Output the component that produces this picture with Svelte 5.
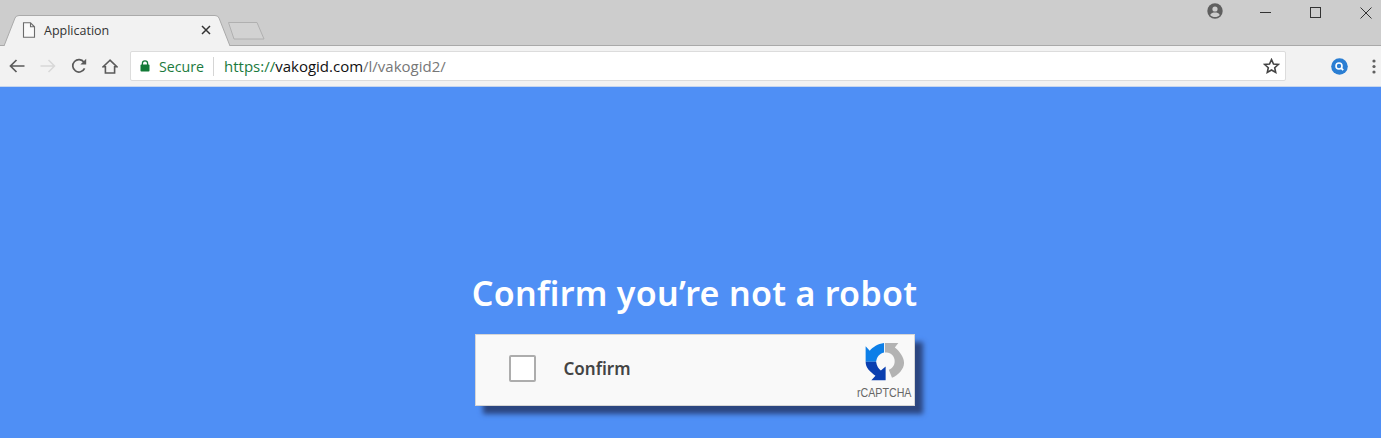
<script>
  const title = "Confirm you’re not a robot";
</script>

<div class="window">
  <header class="tabstrip">
    <div class="tab">
      <svg class="tabshape" width="227" height="32" viewBox="0 0 227 32">
        <path d="M0 31 L11 3 Q12 .5 15 .5 H211 Q214 .5 215 3 L226 31" fill="#f2f2f2" stroke="#aaaaaa" stroke-width="1"/>
      </svg>
      <svg class="doc" width="14" height="16" viewBox="0 0 14 16">
        <path d="M1.5 .8 H8.5 L12.5 4.8 V15.2 H1.5 Z M8.5 .8 V4.8 H12.5" fill="#fafafa" stroke="#6b6b6b" stroke-width="1.1"/>
      </svg>
      <span class="tabtitle">Application</span>
      <svg class="tabclose" width="10" height="10" viewBox="0 0 10 10">
        <path d="M1 1 L9 9 M9 1 L1 9" stroke="#333" stroke-width="1.5"/>
      </svg>
    </div>
    <svg class="newtab" width="37" height="18" viewBox="0 0 37 18">
      <path d="M.5 .5 H29 L36 17 H6 Z" fill="#d2d2d2" stroke="#b0b0b0" stroke-linejoin="round"/>
    </svg>
    <div class="spacer"></div>
    <svg class="profile" width="16" height="16" viewBox="0 0 16 16">
      <circle cx="8" cy="8" r="7.7" fill="#5f5f5f"/>
      <circle cx="8" cy="6" r="2.6" fill="#cdcdcd"/>
      <path d="M3.2 12 C4 9.9 6 9.5 8 9.5 C10 9.5 12 9.9 12.8 12 C11.6 13.4 10 14.1 8 14.1 C6 14.1 4.4 13.4 3.2 12Z" fill="#cdcdcd"/>
    </svg>
    <div class="winbtns">
      <svg width="12" height="12" viewBox="0 0 12 12"><path d="M0 5.5 H11" stroke="#333" stroke-width="1"/></svg>
      <svg width="12" height="12" viewBox="0 0 12 12"><rect x=".5" y=".5" width="10" height="10" fill="none" stroke="#333" stroke-width="1"/></svg>
      <svg width="12" height="12" viewBox="0 0 12 12"><path d="M.5 .5 L11.5 11.5 M11.5 .5 L.5 11.5" stroke="#333" stroke-width="1"/></svg>
    </div>
  </header>

  <nav class="toolbar">
    <div class="navbtns">
      <svg width="16" height="14" viewBox="0 0 16 14"><path d="M15.5 7 H2 M7.5 1 L1.5 7 L7.5 13" fill="none" stroke="#5a5a5a" stroke-width="1.7"/></svg>
      <svg width="16" height="14" viewBox="0 0 16 14"><path d="M.5 7 H14 M8.5 1 L14.5 7 L8.5 13" fill="none" stroke="#d8d8d8" stroke-width="1.5"/></svg>
      <svg width="16" height="16" viewBox="0 0 16 16"><path d="M13.6 10.4 A6.2 6.2 0 1 1 13 4.2" fill="none" stroke="#5a5a5a" stroke-width="1.7"/><path d="M15.2 .8 V6.6 H9.4 Z" fill="#5a5a5a"/></svg>
      <svg width="16" height="15" viewBox="0 0 16 15"><path d="M8 1.2 L1.2 7.8 H3.4 V14 H12.6 V7.8 H14.8 Z" fill="none" stroke="#5a5a5a" stroke-width="1.6"/></svg>
    </div>
    <div class="omnibox">
      <svg class="lock" width="10" height="12" viewBox="0 0 10 12"><path d="M2.4 5 V3.4 A2.6 2.6 0 0 1 7.6 3.4 V5" fill="none" stroke="#137a37" stroke-width="1.3"/><rect x=".5" y="4.6" width="9" height="7" rx=".8" fill="#137a37"/></svg>
      <span class="secure">Secure</span>
      <span class="divider"></span>
      <span class="url"><span class="scheme">https://</span><span class="host">vakogid.com</span><span class="path">/l/vakogid2/</span></span>
      <svg class="star" width="17" height="16" viewBox="0 0 17 16"><path d="M8.5 1.6 L10.5 6 L15.3 6.5 L11.7 9.7 L12.7 14.4 L8.5 12 L4.3 14.4 L5.3 9.7 L1.7 6.5 L6.5 6 Z" fill="none" stroke="#444" stroke-width="1.6" stroke-linejoin="miter"/></svg>
    </div>
    <svg class="ext" width="17" height="17" viewBox="0 0 17 17">
      <circle cx="8.5" cy="8.5" r="8.3" fill="#2a7ed3"/>
      <circle cx="8" cy="8" r="3" fill="none" stroke="#fff" stroke-width="1.6"/>
      <path d="M10.2 10.2 L12.2 12.2" stroke="#fff" stroke-width="1.8"/>
    </svg>
    <svg class="menu" width="4" height="15" viewBox="0 0 4 15">
      <circle cx="2" cy="2" r="1.6" fill="#5f5f5f"/><circle cx="2" cy="7.5" r="1.6" fill="#5f5f5f"/><circle cx="2" cy="13" r="1.6" fill="#5f5f5f"/>
    </svg>
  </nav>

  <main class="page">
    <h1>{title}</h1>
    <div class="card">
      <span class="checkbox"></span>
      <span class="label">Confirm</span>
      <div class="badge">
        <svg width="40" height="39" viewBox="25 15 126 112" preserveAspectRatio="none">
          <path d="M27 27 L40 40 C50 30 65 20 85 18 V45 C70 48 62 58 60 72 H27 Z" fill="#0d7fe8"/>
          <path d="M27 72 H60 C62 85 68 92 75 97 L90 85 V125 H45 L58 112 C40 100 27 90 27 72 Z" fill="#0a3fb0"/>
          <path d="M88 18 H130 L119 31 C135 42 148 60 148 75 C148 92 130 110 110 118 L100 95 C115 88 120 78 118 65 C115 50 102 45 88 45 Z" fill="#b3b3b3"/>
        </svg>
        <span class="brand">rCAPTCHA</span>
      </div>
    </div>
  </main>
</div>

<style>
  :global(body) { margin: 0; }
  .window {
    width: 1381px;
    height: 438px;
    display: flex;
    flex-direction: column;
    overflow: hidden;
    font-family: "Noto Sans", sans-serif;
  }
  .tabstrip {
    height: 46px;
    flex: none;
    box-sizing: border-box;
    background: #cdcdcd;
    border-bottom: 1px solid #a9a9a9;
    display: flex;
    align-items: flex-start;
    padding-left: 4px;
  }
  .tab {
    position: relative;
    width: 226px;
    height: 31px;
    margin-top: 15px;
    display: flex;
    align-items: center;
    padding-left: 18px;
    box-sizing: border-box;
    z-index: 1;
  }
  .tabshape { position: absolute; left: 0; top: 0; }
  .doc { position: relative; margin-top: -1px; }
  .tabtitle {
    position: relative;
    margin-left: 8px;
    font: 12.5px "Open Sans", sans-serif;
    color: #333;
    margin-top: -1px;
  }
  .tabclose { position: absolute; left: 197px; top: 10px; }
  .newtab { margin: 22px 0 0 -2px; }
  .spacer { flex: 1; }
  .profile { margin-top: 3px; }
  .winbtns {
    display: flex;
    gap: 38px;
    margin: 7px 9px 0 37px;
  }
  .toolbar {
    height: 41px;
    flex: none;
    box-sizing: border-box;
    background: #f2f2f2;
    border-bottom: 1px solid #c6d6ee;
    display: flex;
    align-items: center;
    padding-left: 9px;
  }
  .navbtns {
    display: flex;
    align-items: center;
    gap: 15px;
    width: 121px;
    flex: none;
  }
  .omnibox {
    width: 1156px;
    height: 30px;
    flex: none;
    box-sizing: border-box;
    background: #fff;
    border: 1px solid #dcdcdc;
    border-radius: 2px;
    display: flex;
    align-items: center;
    padding-left: 9px;
    font: 15px "Open Sans", sans-serif;
  }
  .secure { color: #1b7a3d; margin-left: 9px; font-size: 14.2px; }
  .divider { width: 1px; height: 19px; background: #d5d5d5; margin: 0 10px 0 9px; }
  .scheme { color: #1b7a3d; }
  .host { color: #111; }
  .path { color: #777; }
  .star { margin-left: auto; margin-right: 5px; }
  .ext { margin-left: 45px; }
  .menu { margin-left: 24px; }
  .page {
    flex: 1;
    background: #4f8ff5;
    display: flex;
    flex-direction: column;
    align-items: center;
    padding: 183px 0 0 8px;
    box-sizing: border-box;
  }
  h1 {
    margin: 0;
    font: 600 34px/46px "Noto Sans", sans-serif;
    letter-spacing: .3px;
    color: #fff;
    white-space: nowrap;
  }
  .card {
    width: 440px;
    height: 72px;
    flex: none;
    margin-top: 18px;
    box-sizing: border-box;
    background: #f9f9f9;
    border: 1px solid #d6d6d6;
    box-shadow: 8px 8px 5px #2c4680;
    display: flex;
    align-items: center;
    padding-left: 33px;
  }
  .checkbox {
    width: 27px;
    height: 27px;
    margin-top: -3px;
    box-sizing: border-box;
    background: #fff;
    border: 2px solid #adadad;
    border-radius: 2px;
  }
  .label {
    margin-left: 28px;
    margin-top: -3px;
    font: 600 17px "Noto Sans", sans-serif;
    color: #444;
  }
  .badge {
    margin-left: auto;
    width: 58px;
    height: 100%;
    display: flex;
    flex-direction: column;
    align-items: center;
    padding-top: 7px;
    box-sizing: border-box;
    font: 13px/13px "Liberation Sans", sans-serif;
    color: #666;
    gap: 5px;
  }
  .brand { transform: scaleX(.82); white-space: nowrap; }
</style>
